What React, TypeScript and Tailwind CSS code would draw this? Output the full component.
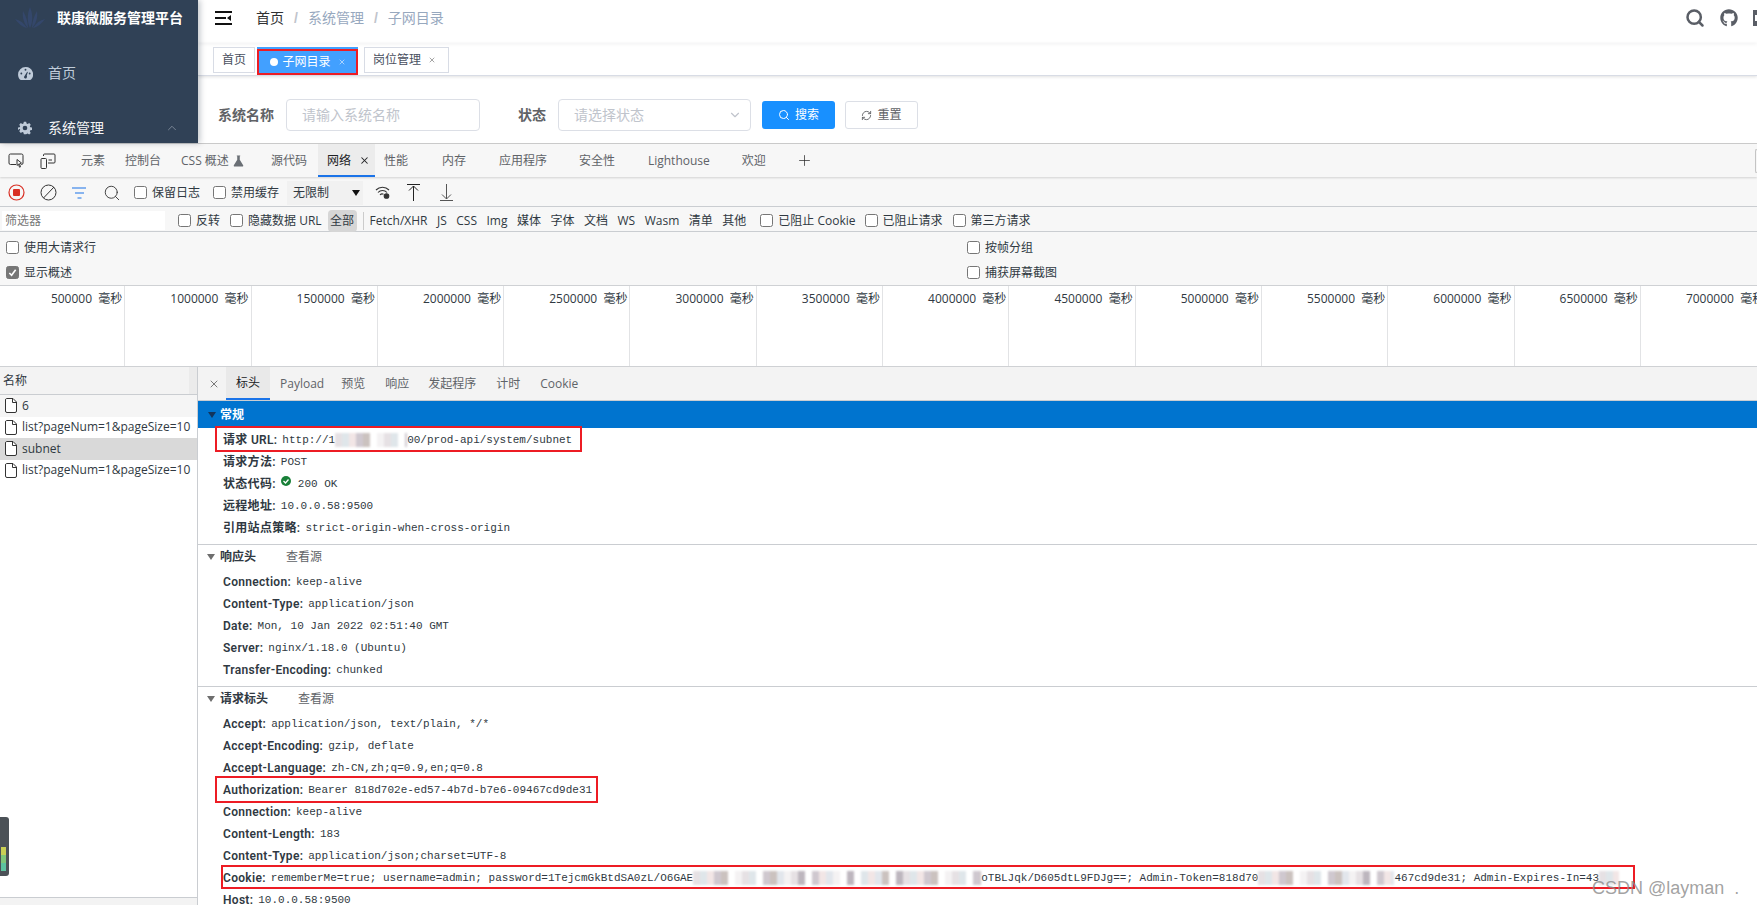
import React from "react";
import { ChevronUp, ChevronDown, Search, RefreshCw, X, Plus } from "lucide-react";
import { FaGithub } from "react-icons/fa";

const mono = "font-['Liberation_Mono',monospace] text-[11px] font-normal";

const tickLabels = [
  "500000", "1000000", "1500000", "2000000", "2500000", "3000000", "3500000",
  "4000000", "4500000", "5000000", "5500000", "6000000", "6500000", "7000000",
];

const mosaicColors = ["#e6e1e4", "#cfc8cf", "#f4f2f3", "#ffffff", "#e2e6ec", "#bdb6be", "#f2e6e6", "#ffffff", "#dfe6ea", "#cbc2bf"];

function Mosaic({ width }: { width: number }) {
  const blocks = Array.from({ length: Math.ceil(width / 7) });
  return (
    <span className="inline-flex h-[14px] overflow-hidden align-middle blur-[1px]" style={{ width }}>
      {blocks.map((_, i) => (
        <span key={i} className="h-full w-[7px] shrink-0" style={{ backgroundColor: mosaicColors[(i * 7 + (i % 3)) % mosaicColors.length] }} />
      ))}
    </span>
  );
}

function Check({ checked, className }: { checked?: boolean; className?: string }) {
  return (
    <span className={`flex h-[13px] w-[13px] shrink-0 items-center justify-center rounded-[2.5px] border border-[#767676] ${checked ? "bg-[#767676]" : "bg-white"} ${className ?? ""}`}>
      {checked && (
        <svg width="9" height="9" viewBox="0 0 10 10" fill="none" stroke="#fff" strokeWidth="1.8">
          <path d="M1.5 5.5 4 8l4.5-6" />
        </svg>
      )}
    </span>
  );
}

function CheckLabel({ text, checked, className }: { text: string; checked?: boolean; className?: string }) {
  return (
    <label className={`flex items-center gap-[5px] ${className ?? ""}`}>
      <Check checked={checked} />
      <span>{text}</span>
    </label>
  );
}

function Sidebar() {
  return (
    <aside className="z-10 h-full w-[198px] shrink-0 overflow-hidden bg-[#304156] shadow-[2px_0_6px_rgba(0,21,41,0.25)]">
      <div className="flex h-[36px] items-center pl-[15px]">
        <svg width="30" height="22" viewBox="0 0 30 22" fill="#34476b">
          <path d="M15 21C12 15 12 7 15 0c3 7 3 15 0 21Z" />
          <path d="M13 21C9 17 7 10 8 4c3 5 5 11 5 17Z" />
          <path d="M17 21c4-4 6-11 5-17-3 5-5 11-5 17Z" />
          <path d="M12 21C7 20 3 16 0 12c5 1 9 4 12 9Z" />
          <path d="M18 21c5-1 9-5 12-9-5 1-9 4-12 9Z" />
        </svg>
        <span className="ml-[12px] text-[14px] font-bold whitespace-nowrap text-white">联康微服务管理平台</span>
      </div>
      <div className="mt-[26px] flex h-[22px] items-center pl-[18px] text-[14px] text-[#bfcbd9]">
        <svg width="15" height="13" viewBox="0 0 16 14" fill="#bfcbd9">
          <path d="M8 0a8 8 0 0 0-8 8c0 2 .7 4 2 5.5.3.3.6.5 1 .5h10c.4 0 .7-.2 1-.5A8 8 0 0 0 8 0Zm0 2a1 1 0 1 1 0 2 1 1 0 0 1 0-2ZM3.5 8a1 1 0 1 1 0-2 1 1 0 0 1 0 2Zm5.5 4a1.5 1.5 0 0 1-2.5-1.5L9.8 5l.7.3L9.3 9.4c.6.6.4 1.8-.3 2.6Zm3.5-4a1 1 0 1 1 0-2 1 1 0 0 1 0 2Z" />
        </svg>
        <span className="ml-[15px]">首页</span>
      </div>
      <div className="mt-[33px] flex h-[22px] items-center pl-[18px] text-[14px] text-[#f4f4f5]">
        <svg width="14" height="14" viewBox="-1 0 18 16" fill="#bfcbd9">
          <path fillRule="evenodd" d="M6.500 0h3l.5 2.200 1.400.6L13.400 1.600l2 2.100-1.200 2 .6 1.400 2.200.4v3l-2.200.5-.6 1.400 1.200 1.900-2 2.100-2-1.200-1.400.6L9.500 16h-3L6 13.800l-1.400-.6-2 1.200-2-2.100 1.200-1.900-.6-1.400L-1 10.500V7.500l2.200-.4.6-1.400-1.200-2 2-2.100 2 1.200L6 2.200 6.500 0ZM8 5a3 3 0 1 0 0 6 3 3 0 0 0 0-6Z" />
        </svg>
        <span className="ml-[16px]">系统管理</span>
        <ChevronUp className="ml-[61px] text-[#8f99a8]" size={14} strokeWidth={1.3} />
      </div>
    </aside>
  );
}

function AppTop() {
  return (
    <div className="flex h-[144px] shrink-0 border-b border-[#cccccc] font-['Liberation_Sans','Noto_Sans_CJK_SC',sans-serif]">
      <Sidebar />
      <div className="flex min-w-0 flex-1 flex-col bg-white">
        <div className="flex h-[43px] shrink-0 items-center pb-[7px] pl-[17px] shadow-[0_1px_4px_rgba(0,21,41,0.06)]">
          <svg width="17" height="14" viewBox="0 0 17 14" fill="#111">
            <path d="M0 0h17v2H0zM0 6h11v2H0zM0 12h17v2H0zM16 4v6l-4-3z" />
          </svg>
          <span className="ml-[24px] text-[14px] text-[#303133]">首页</span>
          <span className="mx-[10px] text-[14px] font-bold text-[#c0c4cc]">/</span>
          <span className="text-[14px] text-[#97a8be]">系统管理</span>
          <span className="mx-[10px] text-[14px] font-bold text-[#c0c4cc]">/</span>
          <span className="text-[14px] text-[#97a8be]">子网目录</span>
          <div className="ml-auto flex items-center text-[#5a5e66]">
            <Search size={20} strokeWidth={3} />
            <FaGithub className="ml-[15px]" size={18} />
            <span className="ml-[15px] h-[16px] w-[4px] border-y-[5px] border-l-[2px] border-[#5a5e66]" />
          </div>
        </div>
        <div className="flex h-[33px] shrink-0 items-start border-b border-[#d8dce5] pt-[4px] pl-[15px] text-[12px] shadow-[0_1px_3px_rgba(0,0,0,0.12)]">
          <div className="flex h-[26px] items-center border border-[#d8dce5] px-[8px] text-[#495060]">首页</div>
          <div className="relative ml-[2px] flex h-[28px] w-[101px] items-center justify-center bg-[#42a0ff] pt-[2px] text-white">
            <span className="mr-[5px] h-[8px] w-[8px] rounded-full bg-white" />
            子网目录
            <X className="ml-[7px] opacity-80" size={8} />
            <span className="absolute inset-x-0 top-[2px] bottom-0 border-2 border-[#ed1c24]" />
          </div>
          <div className="ml-[6px] flex h-[26px] items-center border border-[#d8dce5] pr-[12px] pl-[8px] text-[#495060]">
            岗位管理
            <X className="ml-[7px] text-[#777]" size={8} />
          </div>
        </div>
        <div className="flex flex-1 items-center pt-[11px] pl-[20px] text-[14px]">
          <span className="w-[56px] font-bold text-[#606266]">系统名称</span>
          <input
            readOnly
            placeholder="请输入系统名称"
            className="ml-[12px] h-[32px] w-[194px] rounded-[4px] border border-[#dcdfe6] px-[15px] text-[14px] placeholder:text-[#c0c4cc]"
          />
          <span className="ml-[38px] w-[28px] font-bold text-[#606266]">状态</span>
          <div className="ml-[12px] flex h-[32px] w-[193px] items-center justify-between rounded-[4px] border border-[#dcdfe6] px-[15px] pr-[8px] text-[#c0c4cc]">
            请选择状态
            <ChevronDown size={14} />
          </div>
          <div className="ml-[11px] flex h-[28px] w-[73px] items-center justify-center gap-[5px] rounded-[3px] bg-[#1890ff] text-[12px] text-white">
            <Search size={12} />
            搜索
          </div>
          <div className="ml-[10px] flex h-[28px] w-[73px] items-center justify-center gap-[5px] rounded-[3px] border border-[#dcdfe6] text-[12px] text-[#606266]">
            <RefreshCw size={11} />
            重置
          </div>
        </div>
      </div>
    </div>
  );
}

const devTabs = [
  { label: "元素", cls: "ml-[25px]" },
  { label: "控制台", cls: "ml-[20px]" },
  { label: "CSS 概述", cls: "ml-[20px]" },
];
const devTabsAfter = [
  { label: "内存", cls: "ml-[34px]" },
  { label: "应用程序", cls: "ml-[33px]" },
  { label: "安全性", cls: "ml-[32px]" },
  { label: "Lighthouse", cls: "ml-[33px]" },
  { label: "欢迎", cls: "ml-[32px]" },
];

function DevTabs() {
  return (
    <div className="relative z-10 flex h-[33px] shrink-0 items-center pl-[8px] text-[12px] text-[#5f6368] shadow-[0_1px_2px_rgba(0,0,0,0.15)]">
      <svg width="16" height="15" viewBox="0 0 16 15" fill="none" stroke="#333" strokeWidth="1">
        <path d="M8 11.500H2.500A1.500 1.500 0 0 1 1 10V2.500A1.500 1.500 0 0 1 2.500 1h11A1.500 1.500 0 0 1 15 2.500V10a1.500 1.500 0 0 1-1.500 1.500H13" />
        <path d="M9 6.500l4.500 3.500-2 .8 1 3-1 .4-1-3-1.500 1.200z" />
      </svg>
      <svg className="ml-[16px]" width="16" height="16" viewBox="0 0 16 16" fill="none" stroke="#333" strokeWidth="1">
        <rect x="1" y="5.500" width="5.500" height="10" rx="1" />
        <path d="M3.500 3V2a1 1 0 0 1 1-1H14a1 1 0 0 1 1 1v7a1 1 0 0 1-1 1H8M8.500 7H12" />
      </svg>
      {devTabs.map((t) => (
        <span key={t.label} className={t.cls}>{t.label}</span>
      ))}
      <svg className="ml-[4px]" width="11" height="12" viewBox="0 0 13 13" fill="#6a6f75">
        <path d="M4.500 0h4v1H8v4l4 6.500a1 1 0 0 1-1 1.500H2a1 1 0 0 1-1-1.500L5 5V1h-.5z" />
      </svg>
      <span className="ml-[27px]">源代码</span>
      <div className="ml-[11px] flex h-[33px] w-[57px] items-center self-start border-b-2 border-[#1a73e8] bg-[#ececec] pt-[2px] pl-[9px] text-[#202124]">
        网络
        <X className="ml-[8px]" size={11} strokeWidth={2.2} />
      </div>
      <span className="ml-[9px]">性能</span>
      {devTabsAfter.map((t) => (
        <span key={t.label} className={t.cls}>{t.label}</span>
      ))}
      <Plus className="ml-[30px] text-[#222]" size={17} strokeWidth={1} />
      <span className="ml-auto h-[24px] w-[2px] rounded-l-[2px] border-y border-l border-[#c4c4c4]" />
    </div>
  );
}

function Toolbar() {
  return (
    <div className="flex h-[30px] shrink-0 items-center border-b border-[#cacdd1] pt-[2px] pl-[8px] text-[12px] text-[#303942]">
      <svg width="17" height="17" viewBox="0 0 17 17">
        <circle cx="8.500" cy="8.500" r="7.500" fill="none" stroke="#d93025" strokeWidth="1.200" />
        <rect x="5" y="5" width="7" height="7" rx="1" fill="#d93025" />
      </svg>
      <svg className="ml-[15px]" width="17" height="17" viewBox="0 0 17 17" fill="none" stroke="#333" strokeWidth="1">
        <circle cx="8.500" cy="8.500" r="7.500" />
        <path d="M3.500 14 14 3" />
      </svg>
      <svg className="ml-[15px]" width="16" height="12" viewBox="0 0 16 12" fill="none" stroke="#1a73e8" strokeWidth="1.200">
        <path d="M0 1h14M3 6h9M5.500 11h4" />
      </svg>
      <Search className="ml-[15px] text-[#333]" size={18} strokeWidth={1.2} />
      <CheckLabel text="保留日志" className="ml-[13px]" />
      <CheckLabel text="禁用缓存" className="ml-[13px]" />
      <div className="ml-[8px] flex h-[24px] w-[76px] items-center justify-between bg-[#f1f1f1] pr-[3px] pl-[6px]">
        无限制
        <span className="h-0 w-0 border-x-[4.5px] border-t-[6px] border-x-transparent border-t-[#111]" />
      </div>
      <svg className="ml-[12px]" width="16" height="15" viewBox="0 0 16 15" fill="none" stroke="#333" strokeWidth="1.100">
        <path d="M1 5a9 9 0 0 1 13 0M3 7.500a6 6 0 0 1 9 0M5 10a3 3 0 0 1 3.500-.8" />
        <circle cx="11.500" cy="11" r="2.300" fill="#333" />
      </svg>
      <svg className="ml-[16px]" width="13" height="17" viewBox="0 0 13 17" fill="none" stroke="#222" strokeWidth="1">
        <path d="M0 .5h13M6.500 17V2M2 6.500 6.500 2 11 6.500" />
      </svg>
      <svg className="ml-[20px]" width="13" height="17" viewBox="0 0 13 17" fill="none" stroke="#555" strokeWidth="1">
        <path d="M0 16.500h13M6.500 0v15M2 10.500 6.500 15l4.500-4.500" />
      </svg>
    </div>
  );
}

const typeFilters = ["Fetch/XHR", "JS", "CSS", "Img", "媒体", "字体", "文档", "WS", "Wasm", "清单", "其他"];

function FilterBar() {
  return (
    <div className="flex h-[25px] shrink-0 items-center border-b border-[#cacdd1] pt-[3px] pl-[2px] text-[12px] text-[#303942]">
      <div className="flex h-[19px] w-[163px] items-center bg-white pl-[3px] text-[#777]">筛选器</div>
      <CheckLabel text="反转" className="ml-[13px]" />
      <CheckLabel text="隐藏数据 URL" className="ml-[10px]" />
      <div className="ml-[6px] flex h-[22px] w-[29px] items-center justify-center rounded-[4px] bg-[#d6d6d6]">全部</div>
      <span className="mx-[6px] h-[18px] w-px bg-[#ccc]" />
      <div className="flex items-center gap-[9.5px]">
        {typeFilters.map((f) => (
          <span key={f}>{f}</span>
        ))}
      </div>
      <CheckLabel text="已阻止 Cookie" className="ml-[14px]" />
      <CheckLabel text="已阻止请求" className="ml-[9px]" />
      <CheckLabel text="第三方请求" className="ml-[10px]" />
    </div>
  );
}

function Options() {
  return (
    <div className="grid h-[53px] shrink-0 grid-cols-[961px_1fr] grid-rows-2 items-center pt-[3px] pl-[6px] text-[12px] text-[#303942]">
      <CheckLabel text="使用大请求行" />
      <CheckLabel text="按帧分组" />
      <CheckLabel text="显示概述" checked />
      <CheckLabel text="捕获屏幕截图" />
    </div>
  );
}

function Overview() {
  return (
    <div className="h-[82px] shrink-0 overflow-hidden border-y border-[#cfd1d4] bg-white text-[12px] text-[#303942]">
      <div className="-ml-[1px] flex h-full">
        {tickLabels.map((t) => (
          <div key={t} className="w-[126.3px] shrink-0 border-r border-[#e2e3e5] pt-[4px] pr-[2px] text-right whitespace-nowrap">
            {t}&nbsp;&nbsp;毫秒
          </div>
        ))}
      </div>
    </div>
  );
}

function FileIcon() {
  return (
    <svg className="shrink-0" width="12" height="15" viewBox="0 0 12 15" fill="#fff" stroke="#333" strokeWidth="1">
      <path d="M1.500.5H8L11.500 4v9a1.500 1.500 0 0 1-1.500 1.500H2A1.500 1.500 0 0 1 .5 13V2A1.500 1.500 0 0 1 1.500.5Z" />
      <path d="M7.500.5V4.500h4" fill="none" />
    </svg>
  );
}

const requests = [
  { name: "6", cls: "bg-[#f5f5f5]" },
  { name: "list?pageNum=1&pageSize=10", cls: "bg-white" },
  { name: "subnet", cls: "bg-[#d9d9d9]" },
  { name: "list?pageNum=1&pageSize=10", cls: "bg-white" },
];

function NameColumn() {
  return (
    <div className="flex h-full w-[198px] shrink-0 flex-col border-r border-[#cacdd1] bg-white text-[12px] text-[#303942]">
      <div className="flex h-[28px] shrink-0 items-center justify-between border-b border-[#cacdd1] bg-[#f3f3f3] pl-[3px]">
        名称
        <span className="h-full w-[8px] bg-[#ebebeb]" />
      </div>
      {requests.map((r, i) => (
        <div key={i} className={`flex h-[21.5px] items-center gap-[5px] overflow-hidden pl-[5px] whitespace-nowrap ${r.cls}`}>
          <FileIcon />
          {r.name}
        </div>
      ))}
      <div className="flex-1" />
      <div className="h-[8px] shrink-0 border-t border-[#cacdd1] bg-[#f3f3f3]" />
    </div>
  );
}

type Row = { k: string; v: React.ReactNode; box?: string };

const generalRows: Row[] = [
  {
    k: "请求 URL:",
    v: (
      <>
        http://1
        <Mosaic width={72} />
        00/prod-api/system/subnet
      </>
    ),
    box: "-top-[3px] -right-[10px] -bottom-[1px] -left-[8px]",
  },
  { k: "请求方法:", v: "POST" },
  {
    k: "状态代码:",
    v: (
      <span className="inline-flex items-center">
        <svg className="mr-[7px] -mt-[6px]" width="10" height="10" viewBox="0 0 10 10">
          <circle cx="5" cy="5" r="5" fill="#188038" />
          <path d="M2.500 5 4.500 7 7.500 3.500" fill="none" stroke="#fff" strokeWidth="1.300" />
        </svg>
        200 OK
      </span>
    ),
  },
  { k: "远程地址:", v: "10.0.0.58:9500" },
  { k: "引用站点策略:", v: "strict-origin-when-cross-origin" },
];

const responseRows: Row[] = [
  { k: "Connection:", v: "keep-alive" },
  { k: "Content-Type:", v: "application/json" },
  { k: "Date:", v: "Mon, 10 Jan 2022 02:51:40 GMT" },
  { k: "Server:", v: "nginx/1.18.0 (Ubuntu)" },
  { k: "Transfer-Encoding:", v: "chunked" },
];

const requestRows: Row[] = [
  { k: "Accept:", v: "application/json, text/plain, */*" },
  { k: "Accept-Encoding:", v: "gzip, deflate" },
  { k: "Accept-Language:", v: "zh-CN,zh;q=0.9,en;q=0.8" },
  {
    k: "Authorization:",
    v: "Bearer 818d702e-ed57-4b7d-b7e6-09467cd9de31",
    box: "-top-[3px] -right-[6px] -bottom-[2px] -left-[8px]",
  },
  { k: "Connection:", v: "keep-alive" },
  { k: "Content-Length:", v: "183" },
  { k: "Content-Type:", v: "application/json;charset=UTF-8" },
  {
    k: "Cookie:",
    v: (
      <>
        rememberMe=true; username=admin; password=1TejcmGkBtdSA0zL/O6GAE
        <Mosaic width={288} />
        oTBLJqk/D605dtL9FDJg==; Admin-Token=818d70
        <Mosaic width={136} />
        467cd9de31; Admin-Expires-In=43
        <Mosaic width={20} />
      </>
    ),
    box: "-top-[2px] -right-[16px] bottom-0 -left-[2px]",
  },
  { k: "Host:", v: "10.0.0.58:9500" },
];

function HeaderRows({ rows }: { rows: Row[] }) {
  return (
    <>
      {rows.map((r) => (
        <div key={r.k} className="relative flex h-[22px] w-fit items-center whitespace-nowrap">
          <span className="font-['Roboto','Noto_Sans_CJK_SC',sans-serif] text-[12px] font-semibold tracking-[0.3px] text-[#303942]">{r.k}</span>
          <span className={`ml-[5px] text-[#303942] ${mono}`}>{r.v}</span>
          {r.box && <span className={`absolute border-2 border-[#ed1c24] ${r.box}`} />}
        </div>
      ))}
    </>
  );
}

function Triangle({ color }: { color: string }) {
  return <span className="h-0 w-0 border-x-[4px] border-t-[6px] border-x-transparent" style={{ borderTopColor: color }} />;
}

function SectionTitle({ title }: { title: string }) {
  return (
    <div className="flex h-[24px] items-center pl-[9px] text-[12px] text-[#303942]">
      <Triangle color="#6e6e6e" />
      <span className="ml-[5px] font-semibold">{title}</span>
      <span className="ml-[30px] text-[#5f6368]">查看源</span>
    </div>
  );
}

const detailTabs = [
  { label: "Payload", cls: "ml-[10px]" },
  { label: "预览", cls: "ml-[17px]" },
  { label: "响应", cls: "ml-[20px]" },
  { label: "发起程序", cls: "ml-[19px]" },
  { label: "计时", cls: "ml-[20px]" },
  { label: "Cookie", cls: "ml-[20px]" },
];

function Details() {
  return (
    <div className="min-w-0 flex-1 overflow-hidden bg-white text-[12px]">
      <div className="flex h-[34px] items-center border-b border-[#cacdd1] bg-[#f3f3f3] pl-[10px] text-[#5f6368]">
        <X className="text-[#444]" size={12} strokeWidth={1.4} />
        <div className="ml-[6px] flex h-[33px] w-[44px] items-center justify-center self-start border-b-2 border-[#1a73e8] bg-[#e9e9e9] text-[#202124]">标头</div>
        {detailTabs.map((t) => (
          <span key={t.label} className={t.cls}>{t.label}</span>
        ))}
      </div>
      <div className="flex h-[27px] items-center bg-[#0074cf] pl-[10px] font-semibold text-white">
        <Triangle color="#12355c" />
        <span className="ml-[4px]">常规</span>
      </div>
      <div className="border-b border-[#cacdd1] pt-[1px] pb-[5px] pl-[25px]">
        <HeaderRows rows={generalRows} />
      </div>
      <SectionTitle title="响应头" />
      <div className="border-b border-[#cacdd1] pt-[2px] pb-[5px] pl-[25px]">
        <HeaderRows rows={responseRows} />
      </div>
      <SectionTitle title="请求标头" />
      <div className="pt-[2px] pl-[25px]">
        <HeaderRows rows={requestRows} />
      </div>
    </div>
  );
}

export default function App() {
  return (
    <div className="relative flex h-screen w-full flex-col overflow-hidden bg-white font-['Open_Sans','Noto_Sans_CJK_SC',sans-serif]">
      <AppTop />
      <div className="flex h-[223px] shrink-0 flex-col bg-[#f7f7f7]">
        <DevTabs />
        <Toolbar />
        <FilterBar />
        <Options />
        <Overview />
      </div>
      <div className="flex min-h-0 flex-1">
        <NameColumn />
        <Details />
      </div>

      {/* meter widget on the left edge */}
      <svg className="absolute top-[817px] left-0" width="9" height="59" viewBox="0 0 9 59">
        <path d="M0 0h6a3 3 0 0 1 3 3v53a3 3 0 0 1-3 3H0Z" fill="#4b5157" />
        <path d="M1 30h5v8H1z" fill="#c9cf55" />
        <path d="M1 38h5v8H1z" fill="#7fc77a" />
        <path d="M1 46h5v8H1z" fill="#5cc3a0" />
      </svg>

      {/* watermark */}
      <span className="absolute top-[875px] left-[1592px] font-['Liberation_Sans',sans-serif] text-[18px] whitespace-nowrap text-[#8a8a8a]/80">
        CSDN @layman&nbsp;&nbsp;.
      </span>
    </div>
  );
}
